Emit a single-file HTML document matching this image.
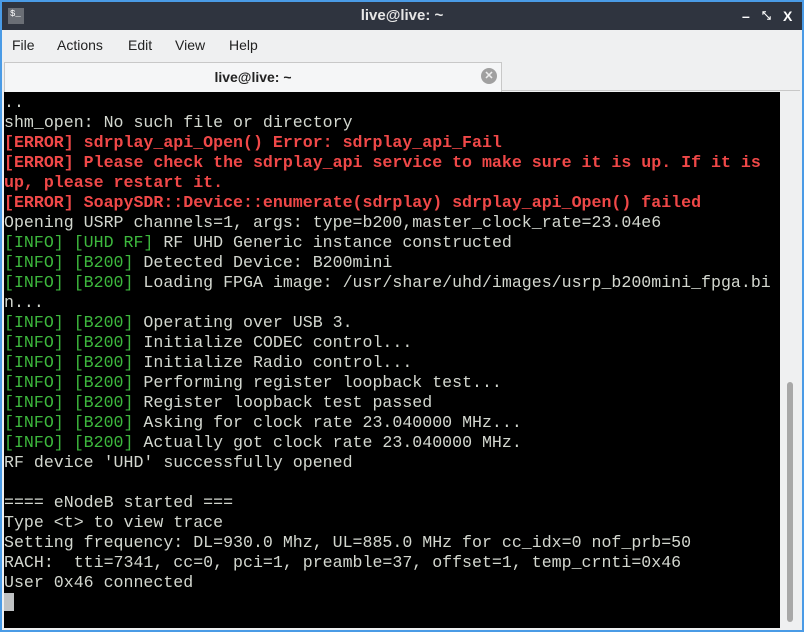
<!DOCTYPE html>
<html><head><meta charset="utf-8"><style>
*{margin:0;padding:0;box-sizing:border-box}
html,body{width:804px;height:632px;overflow:hidden;background:#4a9be6}
.win{position:absolute;left:2px;top:2px;width:800px;height:628px;background:#eff0f1}
.title{position:absolute;left:0;top:0;width:800px;height:28px;background:#2f343f;color:#e6e6e6;font:bold 15px "Liberation Sans",sans-serif;text-align:center;line-height:28px}
.icon{position:absolute;left:6px;top:6px;width:16px;height:16px;background:#6a6e75;color:#fff;font:9px "Liberation Mono",monospace;line-height:12px;padding-left:2px;text-align:left}
.ctl{position:absolute;top:0;line-height:28px;color:#fff;font:bold 14px/28px "Liberation Sans",sans-serif}
.menu{position:absolute;left:0;top:28px;height:30px;width:800px;font:14px "Liberation Sans",sans-serif;color:#222;line-height:30px}
.menu span{position:absolute}
.tab{position:absolute;left:2px;top:60px;width:498px;height:30px;background:#f5f6f7;border:1px solid #c8c8c8;border-bottom:none;font:bold 14px "Liberation Sans",sans-serif;text-align:center;line-height:28px;color:#222}
.tabline{position:absolute;left:500px;top:88px;width:298px;height:1px;background:#c8c8c8}
.x{position:absolute;left:476px;top:5px;width:16px;height:16px;border-radius:50%;background:#a0a0a0;color:#eee;font:bold 11px "Liberation Sans",sans-serif;line-height:16px;text-align:center}
.term{position:absolute;left:2px;top:90px;width:776px;height:536px;background:#000;overflow:hidden}
pre{position:absolute;left:0;top:1px;font:16.6px/20px "Liberation Mono",monospace;color:#d3d7cf;white-space:pre}
.r{color:#f04848;font-weight:bold}.g{color:#3db83d}
.cur{display:inline-block;width:10px;height:18px;background:#bfc2c4;vertical-align:-4px}
.sb{position:absolute;left:778px;top:90px;width:20px;height:536px;background:#eff0f1}
.th{position:absolute;left:785px;top:380px;width:6px;height:240px;border-radius:3px;background:#a8a8a8}
</style></head><body><div class="win">
<div class="title"><div class="icon">$_</div>live@live: ~<span class="ctl" style="left:740px">–</span><span class="ctl" style="left:760px;font-size:11px">⤡</span><span class="ctl" style="left:781px">X</span></div>
<div class="menu"><span style="left:10px">File</span><span style="left:55px">Actions</span><span style="left:126px">Edit</span><span style="left:173px">View</span><span style="left:227px">Help</span></div>
<div class="tab">live@live: ~<div class="x">✕</div></div><div class="tabline"></div>
<div class="term"><pre>..
shm_open: No such file or directory
<span class="r">[ERROR] sdrplay_api_Open() Error: sdrplay_api_Fail
[ERROR] Please check the sdrplay_api service to make sure it is up. If it is
up, please restart it.
[ERROR] SoapySDR::Device::enumerate(sdrplay) sdrplay_api_Open() failed</span>
Opening USRP channels=1, args: type=b200,master_clock_rate=23.04e6
<span class="g">[INFO] [UHD RF]</span> RF UHD Generic instance constructed
<span class="g">[INFO] [B200]</span> Detected Device: B200mini
<span class="g">[INFO] [B200]</span> Loading FPGA image: /usr/share/uhd/images/usrp_b200mini_fpga.bi
n...
<span class="g">[INFO] [B200]</span> Operating over USB 3.
<span class="g">[INFO] [B200]</span> Initialize CODEC control...
<span class="g">[INFO] [B200]</span> Initialize Radio control...
<span class="g">[INFO] [B200]</span> Performing register loopback test...
<span class="g">[INFO] [B200]</span> Register loopback test passed
<span class="g">[INFO] [B200]</span> Asking for clock rate 23.040000 MHz...
<span class="g">[INFO] [B200]</span> Actually got clock rate 23.040000 MHz.
RF device 'UHD' successfully opened

==== eNodeB started ===
Type &lt;t&gt; to view trace
Setting frequency: DL=930.0 Mhz, UL=885.0 MHz for cc_idx=0 nof_prb=50
RACH:  tti=7341, cc=0, pci=1, preamble=37, offset=1, temp_crnti=0x46
User 0x46 connected
<span class="cur"></span></pre></div>
<div class="sb"></div><div class="th"></div>
</div></body></html>
